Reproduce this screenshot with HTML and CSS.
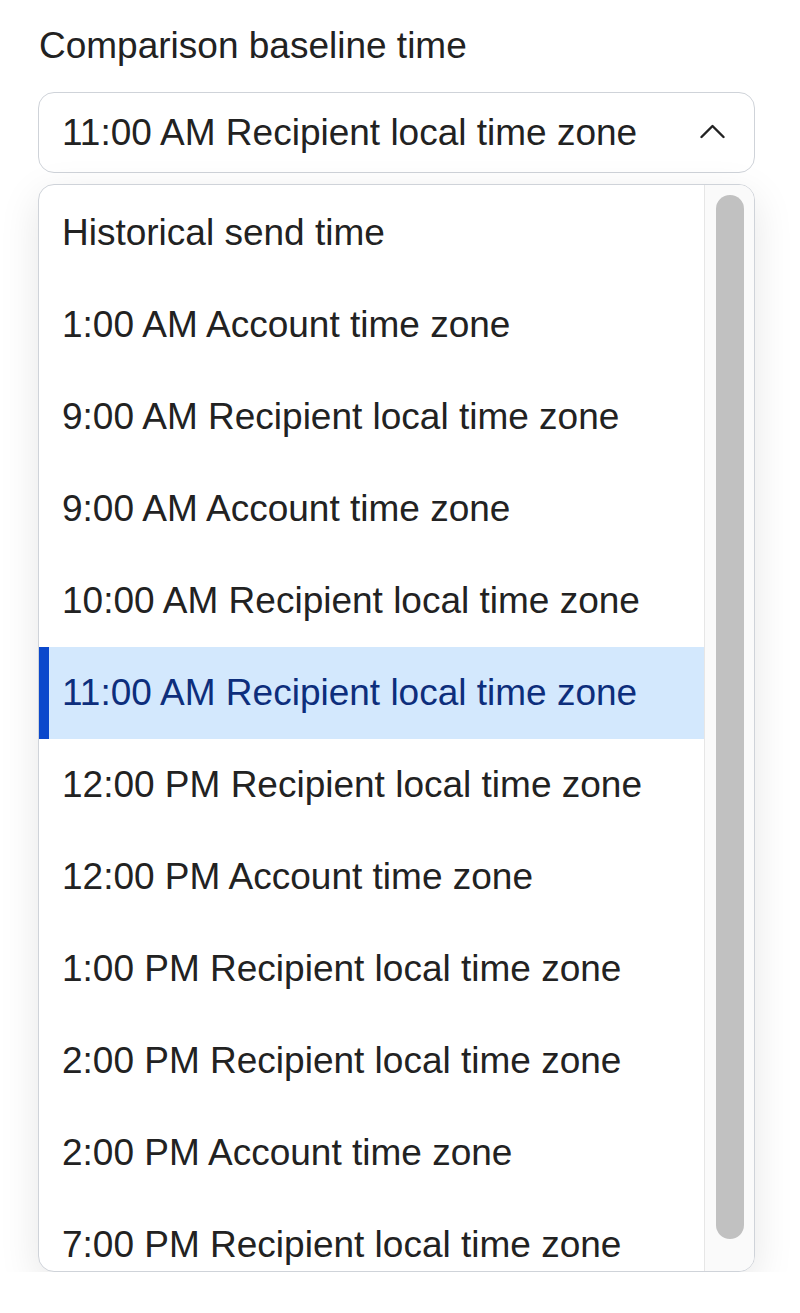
FILE: index.html
```html
<!DOCTYPE html>
<html>
<head>
<meta charset="utf-8" />
<title>Comparison baseline time</title>
<meta name="viewport" content="width=device-width, initial-scale=1">
<link rel="stylesheet" href="styles.css">
</head>

<body>
<div class="field">
  <label class="field-label" for="baseline">Comparison baseline time</label>

  <button type="button" class="select-box" id="baseline">
    <span class="select-value">11:00 AM Recipient local time zone</span>
    <svg class="chevron" width="25" height="16" viewBox="0 0 25 16"><path d="M1.5 14 L12.5 3 L23.5 14" fill="none" stroke="#222" stroke-width="2.4" stroke-linecap="round" stroke-linejoin="round"/></svg>
  </button>

  <div class="menu">
    <ul class="options">
      <li class="option">Historical send time</li>
      <li class="option">1:00 AM Account time zone</li>
      <li class="option">9:00 AM Recipient local time zone</li>
      <li class="option">9:00 AM Account time zone</li>
      <li class="option">10:00 AM Recipient local time zone</li>
      <li class="option selected">11:00 AM Recipient local time zone</li>
      <li class="option">12:00 PM Recipient local time zone</li>
      <li class="option">12:00 PM Account time zone</li>
      <li class="option">1:00 PM Recipient local time zone</li>
      <li class="option">2:00 PM Recipient local time zone</li>
      <li class="option">2:00 PM Account time zone</li>
      <li class="option">7:00 PM Recipient local time zone</li>
    </ul>
    <div class="scroll-track"><div class="scroll-thumb"></div></div>
  </div>
</div>
</body>
</html>
```

FILE: styles.css
```css
body {
  margin: 0;
  background: #fff;
  font-family: "Liberation Sans", Arial, sans-serif;
  color: #222;
}

.field {
  padding: 26px 45px 0 38px;
}

.field-label {
  display: block;
  font-size: 37px;
  line-height: 40px;
  padding-left: 1px;
  margin-bottom: 26px;
}

.select-box {
  display: flex;
  align-items: center;
  justify-content: space-between;
  width: 100%;
  height: 81px;
  padding: 0 29px 0 23px;
  border: 1.5px solid #cfd3d9;
  border-radius: 16px;
  background: #fff;
  font: inherit;
  font-size: 37px;
  color: #222;
  box-sizing: border-box;
}

.chevron {
  margin-top: -4px;
}

.menu {
  display: flex;
  margin-top: 11px;
  height: 1088px;
  border: 1.5px solid #cfd3d9;
  border-radius: 16px;
  box-sizing: border-box;
  overflow: hidden;
  box-shadow: 0 12px 40px rgba(0, 0, 0, 0.10);
  background: #fff;
}

.options {
  flex: 1;
  list-style: none;
  margin: 0;
  padding: 2px 0 0;
}

.option {
  display: flex;
  align-items: center;
  height: 92px;
  padding-left: 23px;
  font-size: 37px;
  white-space: nowrap;
}

.option.selected {
  background: #d3e8fd;
  color: #0d2e7c;
  box-shadow: inset 10px 0 0 #0b48cc;
}

.scroll-track {
  width: 50px;
  border-left: 1.5px solid #e6e6e6;
  background: #fafafa;
  padding: 10px 10px 32px 11px;
  box-sizing: border-box;
}

.scroll-thumb {
  height: 100%;
  border-radius: 14px;
  background: #c1c1c1;
}
```
